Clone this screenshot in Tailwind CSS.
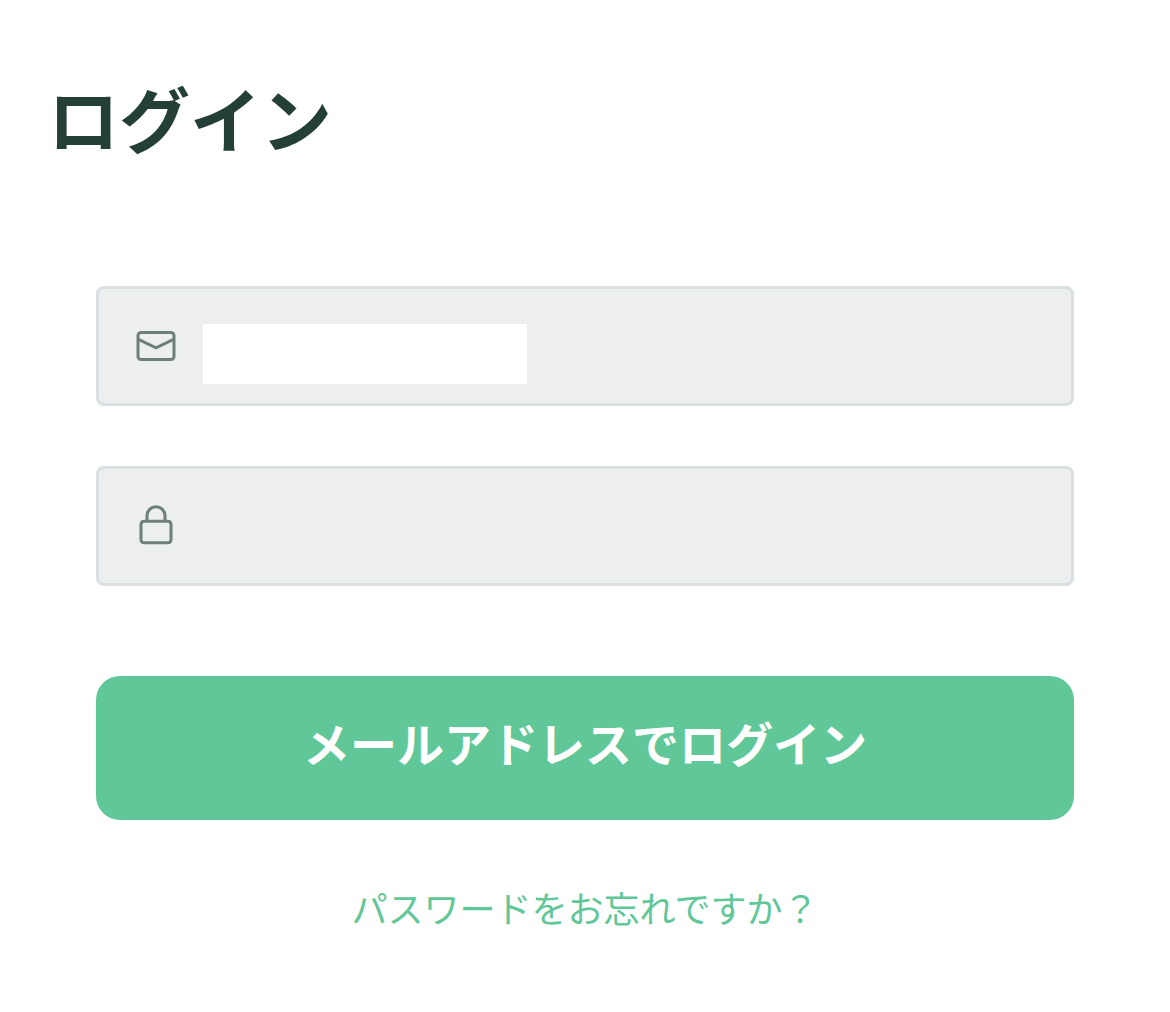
<!DOCTYPE html>
<html lang="ja">
<head>
  <meta charset="UTF-8" />
  <meta name="viewport" content="width=device-width, initial-scale=1.0" />
  <title>ログイン</title>
  <script src="https://cdn.jsdelivr.net/npm/@tailwindcss/browser@4"></script>
</head>
<body class="bg-white font-['Noto_Sans_CJK_JP',sans-serif] text-[#243f38]">
  <main class="px-12 pt-17">
    <h1 class="text-[71px] leading-[96px] font-bold">ログイン</h1>

    <form class="mt-[122px] px-12">
      <label class="flex h-[120px] items-center rounded-lg border-3 border-[#d9e0e3] bg-[#edefee] pl-[37px] pr-6">
        <svg class="h-10 w-10 shrink-0 text-[#6d7f78]" viewBox="0 0 40 40" fill="none" stroke="currentColor" stroke-width="3" aria-hidden="true">
          <rect x="2" y="6.500" width="36" height="27" rx="3" />
          <path d="M2 13.200l18 8.600 18-8.600" />
        </svg>
        <input type="email" aria-label="メールアドレス" class="mt-4 ml-[27px] h-15 w-[324px] bg-white text-4xl outline-none" />
      </label>

      <label class="mt-15 flex h-[120px] items-center rounded-lg border-3 border-[#d9e0e3] bg-[#edefee] pl-[37px] pr-6">
        <svg class="h-10 w-10 shrink-0 overflow-visible text-[#6d7f78]" viewBox="0 0 40 40" fill="none" stroke="currentColor" stroke-width="3" aria-hidden="true">
          <rect x="5" y="15.300" width="30" height="21.500" rx="3" />
          <path d="M11 15.300V9.700a9 9 0 0 1 18 0v5.600" />
        </svg>
        <input type="password" aria-label="パスワード" class="ml-[27px] h-15 flex-1 text-4xl outline-none" />
      </label>

      <button type="submit" class="mt-[90px] h-36 w-full rounded-3xl bg-[#60c799] pb-3 text-[47px] font-bold text-white">メールアドレスでログイン</button>
    </form>

    <p class="mt-15 text-center text-4xl leading-[54px]">
      <a href="#" class="text-[#60c799]">パスワードをお忘れですか？</a>
    </p>
  </main>
</body>
</html>
